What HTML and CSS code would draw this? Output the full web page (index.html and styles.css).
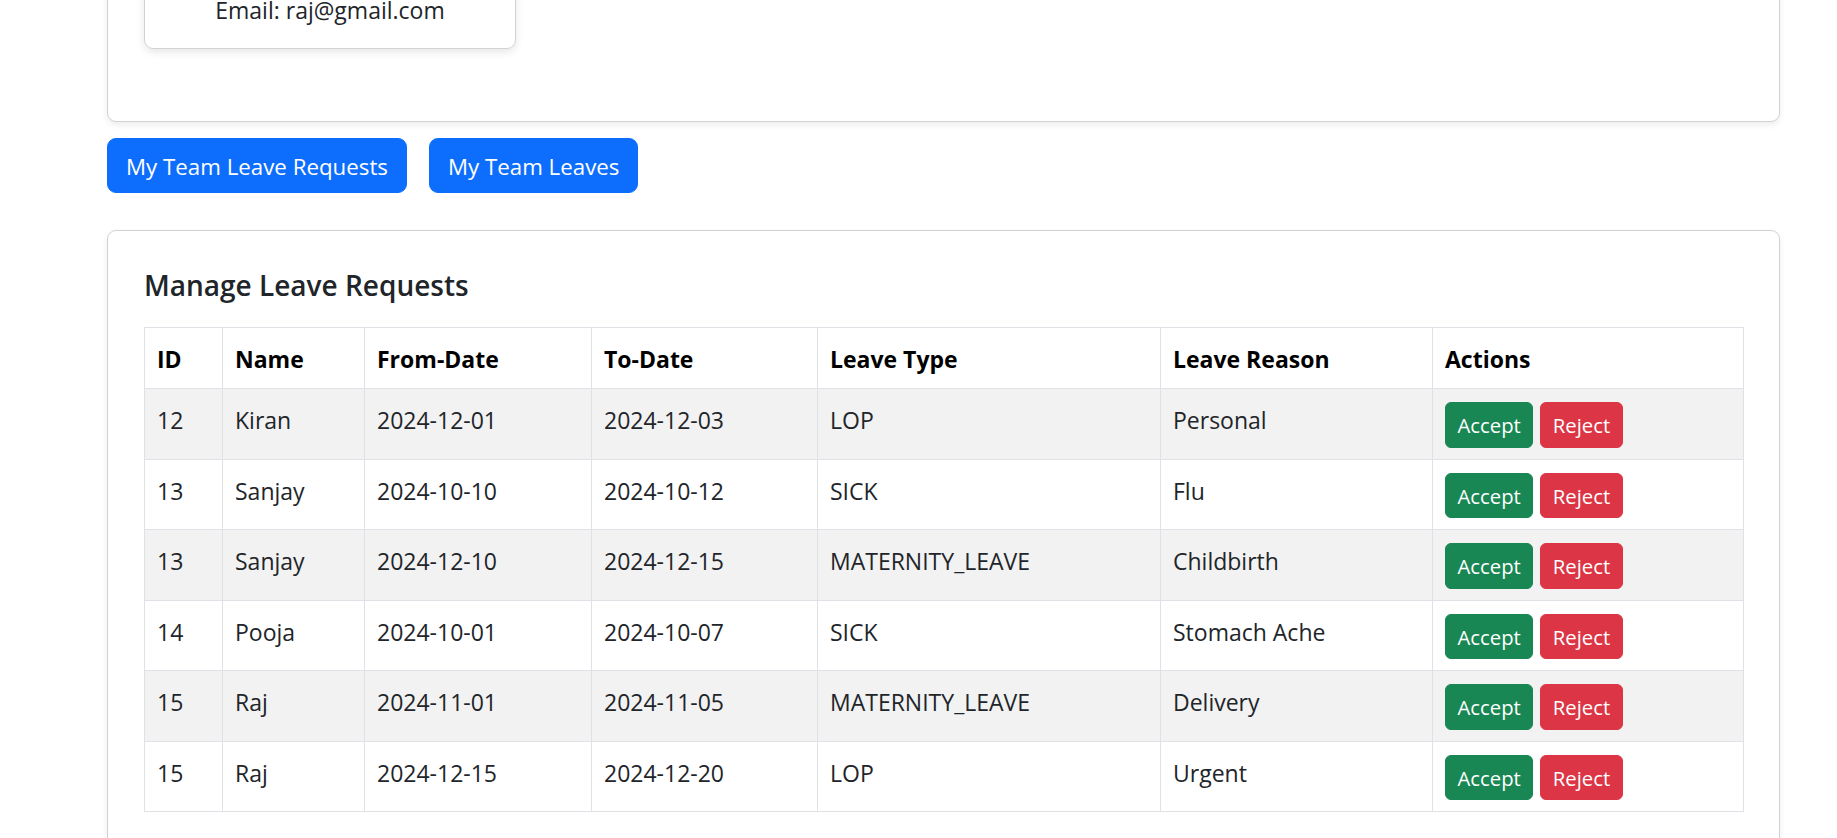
FILE: index.html
```html
<!DOCTYPE html>
<html lang="en">
<head>
<meta charset="utf-8">
<title>Manage Leave Requests</title>
<link rel="stylesheet" href="styles.css">
</head>
<body>
<div class="page">
  <section class="card profile-wrap">
    <div class="profile-card">
      <p class="profile-line">Email: raj@gmail.com</p>
    </div>
  </section>

  <div class="tabs">
    <button class="btn btn-primary">My Team Leave Requests</button>
    <button class="btn btn-primary">My Team Leaves</button>
  </div>

  <section class="card requests">
    <h5 class="card-title">Manage Leave Requests</h5>
    <table class="leave-table">
      <colgroup>
        <col class="c-id"><col class="c-name"><col class="c-from"><col class="c-to"><col class="c-type"><col class="c-reason"><col class="c-act">
      </colgroup>
      <thead>
        <tr><th>ID</th><th>Name</th><th>From-Date</th><th>To-Date</th><th>Leave Type</th><th>Leave Reason</th><th>Actions</th></tr>
      </thead>
      <tbody>
        <tr><td>12</td><td>Kiran</td><td>2024-12-01</td><td>2024-12-03</td><td>LOP</td><td>Personal</td><td><div class="acts"><button class="btn-sm accept">Accept</button><button class="btn-sm reject">Reject</button></div></td></tr>
        <tr><td>13</td><td>Sanjay</td><td>2024-10-10</td><td>2024-10-12</td><td>SICK</td><td>Flu</td><td><div class="acts"><button class="btn-sm accept">Accept</button><button class="btn-sm reject">Reject</button></div></td></tr>
        <tr><td>13</td><td>Sanjay</td><td>2024-12-10</td><td>2024-12-15</td><td>MATERNITY_LEAVE</td><td>Childbirth</td><td><div class="acts"><button class="btn-sm accept">Accept</button><button class="btn-sm reject">Reject</button></div></td></tr>
        <tr><td>14</td><td>Pooja</td><td>2024-10-01</td><td>2024-10-07</td><td>SICK</td><td>Stomach Ache</td><td><div class="acts"><button class="btn-sm accept">Accept</button><button class="btn-sm reject">Reject</button></div></td></tr>
        <tr><td>15</td><td>Raj</td><td>2024-11-01</td><td>2024-11-05</td><td>MATERNITY_LEAVE</td><td>Delivery</td><td><div class="acts"><button class="btn-sm accept">Accept</button><button class="btn-sm reject">Reject</button></div></td></tr>
        <tr><td>15</td><td>Raj</td><td>2024-12-15</td><td>2024-12-20</td><td>LOP</td><td>Urgent</td><td><div class="acts"><button class="btn-sm accept">Accept</button><button class="btn-sm reject">Reject</button></div></td></tr>
      </tbody>
    </table>
  </section>
</div>
</body>
</html>
```
FILE: styles.css
```css
html, body {
  margin: 0;
  background: #fff;
}

body {
  font-family: "Open Sans", "Noto Sans", sans-serif;
  font-size: 23px;
  color: #212529;
  overflow: hidden;
}

.page {
  width: 1673px;
  margin: -70px 0 0 107px;
}

.card {
  box-sizing: border-box;
  background: #fff;
  border: 1px solid #d2d2d2;
  border-radius: 9px;
  box-shadow: 0 3px 6px rgba(0, 0, 0, 0.075);
  padding: 36px;
}

.profile-card {
  box-sizing: border-box;
  width: 372px;
  border: 1px solid #d2d2d2;
  border-radius: 9px;
  box-shadow: 0 3px 8px rgba(0, 0, 0, 0.1);
  padding: 24px 24px 20px;
  text-align: center;
  margin-bottom: 36px;
}

.profile-line {
  margin: 0;
  line-height: 36px;
}

.tabs {
  display: flex;
  gap: 22px;
  margin: 16px 0 37px;
}

.btn {
  font-family: inherit;
  font-size: 22.3px;
  height: 55px;
  padding: 2px 18px 0;
  border-radius: 9px;
  cursor: pointer;
}

.btn-primary {
  background: #0d6efd;
  border: 1.5px solid #0d6efd;
  color: #fff;
}

.card-title {
  margin: 0 0 24px;
  font-size: 28px;
  font-weight: 600;
  line-height: 36px;
  color: #212529;
}

.leave-table {
  width: 1599px;
  border-collapse: collapse;
  table-layout: fixed;
}

.c-id { width: 78px; }
.c-name { width: 142px; }
.c-from { width: 227px; }
.c-to { width: 226px; }
.c-type { width: 343px; }
.c-reason { width: 272px; }
.c-act { width: 311px; }

.leave-table th,
.leave-table td {
  border: 1px solid #dee2e6;
  padding: 13px 12px 11px;
  line-height: 36px;
  text-align: left;
  vertical-align: top;
}

.leave-table th {
  font-weight: 700;
  color: #000;
}

.leave-table tbody tr:nth-child(odd) td {
  background: #f2f2f2;
}

.acts {
  display: flex;
  gap: 7px;
}

.btn-sm {
  font-family: inherit;
  font-size: 20.3px;
  height: 45.5px;
  padding: 1px 11.5px 0;
  border-radius: 6px;
  color: #fff;
  line-height: 1;
}

.accept {
  background: #198754;
  border: 1.5px solid #198754;
}

.reject {
  background: #dc3545;
  border: 1.5px solid #dc3545;
}
```
